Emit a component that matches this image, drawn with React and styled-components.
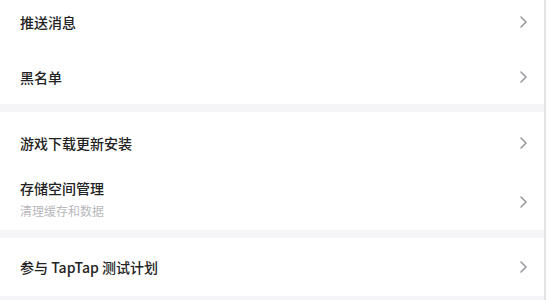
import React from "react";
import styled, { createGlobalStyle } from "styled-components";

const Global = createGlobalStyle`
  html, body { margin: 0; padding: 0; background: #fff; }
  body { font-family: "Noto Sans CJK SC", "Noto Sans", sans-serif; overflow: hidden; }
`;

const Page = styled.div`
  width: 550px;
  height: 300px;
  display: flex;
  overflow: hidden;
  background: #fff;
`;

const Main = styled.div`
  width: 544px;
  display: flex;
  flex-direction: column;
  margin-top: -6px;
  border-right: 2px solid #e3e3e6;
`;

const Group = styled.div`
  display: flex;
  flex-direction: column;
  background: #fff;
`;

const Gap = styled.div`
  height: ${(p) => p.h || 8}px;
  background: #f5f5f7;
  flex-shrink: 0;
`;

const Row = styled.div`
  height: ${(p) => p.h || 56}px;
  display: flex;
  align-items: center;
  justify-content: space-between;
  padding: 0 16px 0 20px;
  box-sizing: border-box;
`;

const Texts = styled.div`
  display: flex;
  flex-direction: column;
  gap: 5px;
  margin-bottom: ${(p) => (p.sub ? 7 : 0)}px;
`;

const Title = styled.span`
  font-size: 14px;
  line-height: 20px;
  color: #222;
  font-weight: 500;
`;

const Sub = styled.span`
  font-size: 12px;
  line-height: 16px;
  color: #b8b8bc;
`;

const Chevron = () => (
  <svg width="10" height="14" viewBox="0 0 10 14">
    <path d="M3 2 L8 7 L3 12" fill="none" stroke="#9a9a9e" strokeWidth="1.6" strokeLinecap="round" strokeLinejoin="round" />
  </svg>
);

const Item = ({ title, sub, h }) => (
  <Row h={h}>
    <Texts sub={sub}>
      <Title>{title}</Title>
      {sub && <Sub>{sub}</Sub>}
    </Texts>
    <Chevron />
  </Row>
);

export default function App() {
  return (
    <Page>
      <Global />
      <Main>
        <Group>
          <Item title="推送消息" />
          <Item title="黑名单" h={54} />
        </Group>
        <Gap h={8} />
        <Group>
          <Item title="游戏下载更新安装" h={62} />
          <Item title="存储空间管理" sub="清理缓存和数据" h={56} />
        </Group>
        <Gap h={8} />
        <Group>
          <Item title="参与 TapTap 测试计划" h={58} />
        </Group>
        <Gap h={20} />
      </Main>
    </Page>
  );
}
